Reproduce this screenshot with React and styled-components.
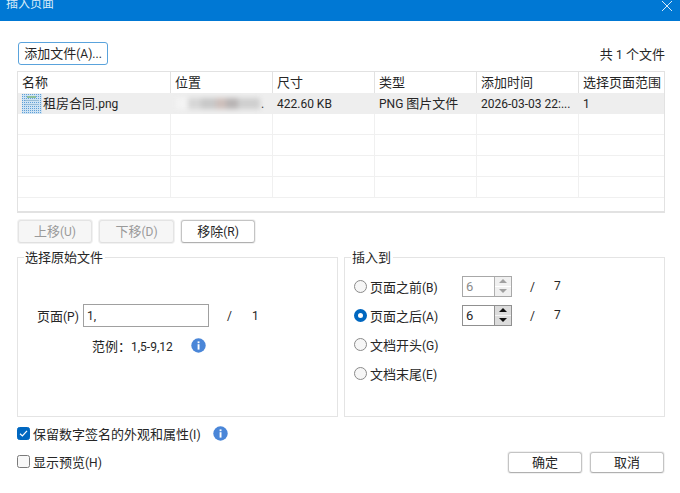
import React from 'react'
import styled, { createGlobalStyle } from 'styled-components'

const GlobalStyle = createGlobalStyle`
  html, body { margin: 0; padding: 0; background: #fff; }
  body {
    width: 680px;
    height: 493px;
    overflow: hidden;
    font-family: Roboto, "Noto Sans CJK SC", sans-serif;
    font-size: 13px;
    color: #262626;
  }
  * { box-sizing: border-box; }
`

// latin runs sit a size below the CJK text, like the UI font of the original
const Lat = styled.span`
  font-size: 12px;
`

const Dialog = styled.div`
  width: 680px;
  height: 493px;
  display: flex;
  flex-direction: column;
  overflow: hidden;
`

const TitleBar = styled.div`
  height: 21px;
  flex: none;
  background: #0078d4;
  color: #d9ecf9;
  padding: 0 8px 0 6px;
  display: flex;
  justify-content: space-between;
  line-height: 11px;
  font-size: 12px;
`

const TitleText = styled.span`
  margin-top: -1px;
`

const CloseIcon = styled.svg`
  width: 10px;
  height: 10px;
  margin-top: 1px;
`

const Body = styled.div`
  flex: 1;
  padding: 21px 15px 0 17px;
  display: flex;
  flex-direction: column;
`

const TopRow = styled.div`
  height: 23px;
  padding-left: 1px;
  display: flex;
  align-items: center;
  justify-content: space-between;
`

const Button = styled.button`
  height: ${p => p.$h || 23}px;
  width: ${p => p.$w}px;
  padding: 0;
  background: ${p => (p.disabled ? '#f6f6f6' : '#fff')};
  color: ${p => (p.disabled ? '#9a9a9a' : '#262626')};
  border: 1px solid ${p => (p.$focus ? '#5aa3dc' : p.disabled ? '#e4e4e4' : '#c4c4c4')};
  border-bottom-color: ${p => (p.$focus ? '#5aa3dc' : p.disabled ? '#e0e0e0' : '#b0b0b0')};
  border-radius: 3px;
  box-shadow: ${p => (p.$focus ? 'none' : '0 0 0 1px #f1f1f1')};
  font: inherit;
  line-height: 1;
`

const Table = styled.div`
  margin-top: 6px;
  width: 648px;
  height: 142px;
  border: 1px solid #e2e2e2;
  border-width: 1px 1px 2px 1px;
  overflow: hidden;
`

const Row = styled.div`
  height: 21px;
  display: grid;
  grid-template-columns: 153px 102px 102px 102px 102px 1fr;
  background: ${p => (p.$selected ? '#eeeeee' : '#fff')};
  border-bottom: ${p => (p.$header || p.$selected ? 'none' : '1px solid #f0f0f0')};
`

const Cell = styled.div`
  padding-left: 4px;
  border-right: 1px solid ${p => (p.$header ? '#e2e2e2' : p.$selected ? '#eeeeee' : '#f0f0f0')};
  display: flex;
  align-items: center;
  white-space: pre;
  overflow: hidden;
  line-height: 20px;
  &:last-child { border-right: none; }
`

const NameCell = styled(Cell)`
  padding-left: 4px;
  gap: 1px;
`

const Smear = styled.div`
  position: relative;
  width: 86px;
  height: 16px;
  &::before {
    content: '';
    position: absolute;
    left: 1px;
    top: 2px;
    width: 84px;
    height: 11px;
    background: linear-gradient(90deg, #f4f4f4 0 14%, #d6d6d6 14% 30%, #c8c8c8 30% 48%, #cdbfbb 48% 60%, #b8b4b4 60% 74%, #cfcfcf 74% 100%);
    filter: blur(2.5px);
  }
`

const ButtonRow = styled.div`
  margin-top: 7px;
  height: 23px;
  padding-left: 1px;
  display: flex;
  gap: 7px;
`

const Panels = styled.div`
  margin-top: 14px;
  display: grid;
  grid-template-columns: 321px 321px;
  gap: 6px;
`

const Panel = styled.fieldset`
  position: relative;
  height: 160px;
  margin: 0;
  padding: 0;
  border: 1px solid #e4e4e4;
  min-width: 0;
`

const Legend = styled.span`
  position: absolute;
  left: 6px;
  top: -8px;
  height: 16px;
  padding: 0 2px 0 1px;
  background: #fff;
  line-height: 15px;
`

const PageRow = styled.div`
  margin-top: 46px;
  padding-left: 19px;
  display: flex;
  align-items: center;
  height: 23px;
`

const PageLabel = styled.span`
  width: 46px;
  flex: none;
`

const PageInput = styled.div`
  width: 126px;
  height: 23px;
  padding-left: 3px;
  border: 1px solid #a0a0a0;
  line-height: 21px;
`

const Slash = styled.span`
  width: ${p => p.$w}px;
  margin-left: ${p => p.$ml}px;
  flex: none;
`

const ExampleRow = styled.div`
  margin-top: 10px;
  padding-left: 74px;
  display: flex;
  align-items: center;
  height: 16px;
`

const InfoDot = styled.svg`
  width: 15px;
  height: 15px;
  margin-left: ${p => p.$ml}px;
  flex: none;
`

const Options = styled.div`
  padding: 17px 0 0 9px;
  display: flex;
  flex-direction: column;
  gap: 7px;
`

const Option = styled.div`
  height: 22px;
  display: flex;
  align-items: center;
`

const Radio = styled.span`
  width: 13px;
  height: 13px;
  flex: none;
  border-radius: 50%;
  background: ${p => (p.$on ? '#fff' : '#f6f6f6')};
  border: ${p => (p.$on ? '4px solid #0067c0' : '1px solid #8a8a8a')};
`

const OptionLabel = styled.span`
  width: 92px;
  margin-left: 3px;
  flex: none;
`

const Spin = styled.div`
  width: 50px;
  height: 21px;
  flex: none;
  display: flex;
  border: 1px solid ${p => (p.$off ? '#a8a8a8' : '#909090')};
  color: ${p => (p.$off ? '#8a8a8a' : '#262626')};
`

const SpinValue = styled.div`
  flex: 1;
  padding-left: 3px;
  line-height: 19px;
  font-size: 13px;
`

const SpinArrows = styled.div`
  width: 17px;
  border-left: 1px solid ${p => (p.$off ? '#b0b0b0' : '#909090')};
  display: flex;
  flex-direction: column;
`

const SpinButton = styled.div`
  flex: 1;
  background: ${p => (p.$off ? '#f0f0f0' : '#dcdcdc')};
  border-top: ${p => (p.$bottom ? `1px solid ${p.$off ? '#fff' : '#f4f4f4'}` : 'none')};
  display: flex;
  align-items: center;
  justify-content: center;
  &::after {
    content: '';
    border-left: 4px solid transparent;
    border-right: 4px solid transparent;
    ${p => (p.$bottom ? 'border-top' : 'border-bottom')}: 4px solid ${p => (p.$off ? '#a0a0a0' : '#111')};
  }
`

const Footer = styled.div`
  margin-top: 7px;
  display: flex;
  justify-content: space-between;
`

const Checks = styled.div`
  display: flex;
  flex-direction: column;
  gap: 10px;
`

const CheckRow = styled.div`
  height: 18px;
  display: flex;
  align-items: center;
`

const Check = styled.span`
  width: 13px;
  height: 13px;
  flex: none;
  margin-right: 3px;
  border-radius: 2.5px;
  display: flex;
  align-items: center;
  justify-content: center;
  background: ${p => (p.$on ? '#0067c0' : '#f8f8f8')};
  border: 1px solid ${p => (p.$on ? '#0067c0' : '#7a7a7a')};
`

const FooterButtons = styled.div`
  margin-top: 28px;
  display: flex;
  gap: 8px;
  padding-right: 1px;
`

const Info = ({ ml }) => (
  <InfoDot $ml={ml} viewBox="0 0 15 15">
    <circle cx="7.5" cy="7.5" r="7.2" fill="#4a86d8" />
    <rect x="6.6" y="6.2" width="1.9" height="5.4" fill="#fff" />
    <rect x="6.6" y="3.4" width="1.9" height="1.8" fill="#fff" />
  </InfoDot>
)

const Thumb = () => (
  <svg width="20" height="20" viewBox="0 0 20 20" style={{ flex: 'none' }}>
    <defs>
      <pattern id="dots" width="2" height="2" patternUnits="userSpaceOnUse">
        <rect width="2" height="2" fill="#cfe3f3" />
        <rect width="1" height="1" fill="#5f9fd6" />
      </pattern>
    </defs>
    <rect width="20" height="20" fill="url(#dots)" />
    <rect x="5" y="2" width="9" height="2" fill="#8fc09a" />
    <rect x="3" y="6" width="14" height="1" fill="#98bcd6" />
    <rect x="3" y="10" width="14" height="1" fill="#98bcd6" />
  </svg>
)

const headers = ['名称', '位置', '尺寸', '类型', '添加时间', '选择页面范围']

const EmptyRow = () => (
  <Row>
    {headers.map(h => <Cell key={h} />)}
  </Row>
)

const PageCount = ({ total }) => (
  <>
    <Slash $w={24} $ml={18}><Lat>/</Lat></Slash>
    <Lat>{total}</Lat>
  </>
)

export default function App() {
  return (
    <Dialog>
      <GlobalStyle />
      <TitleBar>
        <TitleText>插入页面</TitleText>
        <CloseIcon viewBox="0 0 10 10">
          <path d="M0 0L10 10M10 0L0 10" stroke="#d8ebf8" strokeWidth="1" fill="none" />
        </CloseIcon>
      </TitleBar>
      <Body>
        <TopRow>
          <Button $w={90} $focus>添加文件<Lat>(A)...</Lat></Button>
          <span>共 <Lat>1</Lat> 个文件</span>
        </TopRow>
        <Table>
          <Row $header>
            {headers.map(h => <Cell key={h} $header>{h}</Cell>)}
          </Row>
          <Row $selected>
            <NameCell $selected><Thumb /><span>租房合同<Lat>.png</Lat></span></NameCell>
            <Cell $selected><Smear /><Lat>.</Lat></Cell>
            <Cell $selected><Lat>422.60 KB</Lat></Cell>
            <Cell $selected><Lat>PNG </Lat>图片文件</Cell>
            <Cell $selected><Lat>2026-03-03 22:...</Lat></Cell>
            <Cell $selected><Lat>1</Lat></Cell>
          </Row>
          <EmptyRow />
          <EmptyRow />
          <EmptyRow />
          <EmptyRow />
        </Table>
        <ButtonRow>
          <Button $w={74} disabled>上移<Lat>(U)</Lat></Button>
          <Button $w={75} disabled>下移<Lat>(D)</Lat></Button>
          <Button $w={74}>移除<Lat>(R)</Lat></Button>
        </ButtonRow>
        <Panels>
          <Panel>
            <Legend>选择原始文件</Legend>
            <PageRow>
              <PageLabel>页面<Lat>(P)</Lat></PageLabel>
              <PageInput><Lat>1,</Lat></PageInput>
              <Slash $w={25} $ml={18}><Lat>/</Lat></Slash>
              <Lat>1</Lat>
            </PageRow>
            <ExampleRow>
              <span>范例：<Lat>1,5-9,12</Lat></span>
              <Info ml={18} />
            </ExampleRow>
          </Panel>
          <Panel>
            <Legend>插入到</Legend>
            <Options>
              <Option>
                <Radio />
                <OptionLabel>页面之前<Lat>(B)</Lat></OptionLabel>
                <Spin $off>
                  <SpinValue>6</SpinValue>
                  <SpinArrows $off>
                    <SpinButton $off />
                    <SpinButton $off $bottom />
                  </SpinArrows>
                </Spin>
                <PageCount total={7} />
              </Option>
              <Option>
                <Radio $on />
                <OptionLabel>页面之后<Lat>(A)</Lat></OptionLabel>
                <Spin>
                  <SpinValue>6</SpinValue>
                  <SpinArrows>
                    <SpinButton />
                    <SpinButton $bottom />
                  </SpinArrows>
                </Spin>
                <PageCount total={7} />
              </Option>
              <Option>
                <Radio />
                <OptionLabel>文档开头<Lat>(G)</Lat></OptionLabel>
              </Option>
              <Option>
                <Radio />
                <OptionLabel>文档末尾<Lat>(E)</Lat></OptionLabel>
              </Option>
            </Options>
          </Panel>
        </Panels>
        <Footer>
          <Checks>
            <CheckRow>
              <Check $on>
                <svg width="9" height="9" viewBox="0 0 9 9">
                  <path d="M1 4.8L3.4 7L8 1.8" stroke="#fff" strokeWidth="1.2" fill="none" />
                </svg>
              </Check>
              <span>保留数字签名的外观和属性<Lat>(I)</Lat></span>
              <Info ml={12} />
            </CheckRow>
            <CheckRow>
              <Check />
              <span>显示预览<Lat>(H)</Lat></span>
            </CheckRow>
          </Checks>
          <FooterButtons>
            <Button $w={74} $h={21}>确定</Button>
            <Button $w={74} $h={21}>取消</Button>
          </FooterButtons>
        </Footer>
      </Body>
    </Dialog>
  )
}
